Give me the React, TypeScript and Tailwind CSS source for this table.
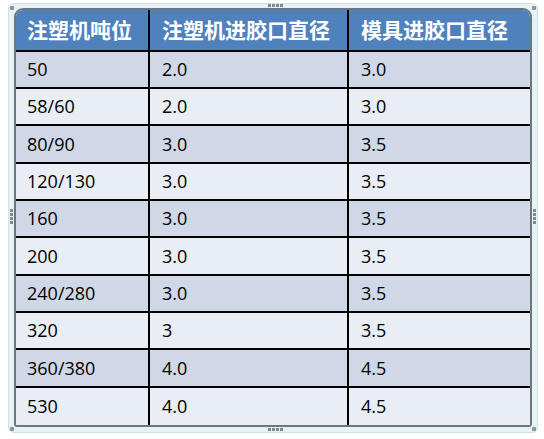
import React from "react";

const rows: [string, string, string][] = [
  ["50", "2.0", "3.0"],
  ["58/60", "2.0", "3.0"],
  ["80/90", "3.0", "3.5"],
  ["120/130", "3.0", "3.5"],
  ["160", "3.0", "3.5"],
  ["200", "3.0", "3.5"],
  ["240/280", "3.0", "3.5"],
  ["320", "3", "3.5"],
  ["360/380", "4.0", "4.5"],
  ["530", "4.0", "4.5"],
];

const Dots = ({ vertical = false }: { vertical?: boolean }) => (
  <div className={vertical ? "flex flex-col gap-[1px]" : "flex gap-[1px]"}>
    {[0, 1, 2, 3].map((i) => (
      <div key={i} className="w-[3px] h-[3px] bg-[#7d8a8e]" />
    ))}
  </div>
);

export default function App() {
  return (
    <div className="w-[544px] h-[439px] bg-white pt-[3px] pl-[8px]">
      <div className="relative w-[530px] h-[430px] rounded-[6px] border border-[#cde0e3] bg-[#e6f2f4] pt-[4px] pl-[5px]">
        {/* resize handles */}
        <div className="absolute left-[259px] top-[0px]"><Dots /></div>
        <div className="absolute left-[259px] bottom-[1px]"><Dots /></div>
        <div className="absolute left-[1px] top-[205px]"><Dots vertical /></div>
        <div className="absolute right-[1px] top-[205px]"><Dots vertical /></div>
        <div className="absolute left-[1px] top-[2px] w-[4px] h-[4px] bg-[#8a9599] rounded-[1px]" />
        <div className="absolute right-[1px] top-[2px] w-[4px] h-[4px] bg-[#8a9599] rounded-[1px]" />
        <div className="absolute left-[1px] bottom-[1px] w-[4px] h-[4px] bg-[#8a9599] rounded-[1px]" />
        <div className="absolute right-[1px] bottom-[1px] w-[4px] h-[4px] bg-[#8a9599] rounded-[1px]" />

        <div
          className="w-[518px] h-[419px] border-2 border-[#6b777b] rounded-t-[9px] rounded-b-[3px] overflow-hidden flex flex-col"
          style={{ fontFamily: '"Open Sans", "Noto Sans CJK SC", sans-serif' }}
        >
          <div
            className="flex h-[42px] bg-[#4f81bd] text-white font-bold text-[21px] border-b-2 border-black"
            style={{ fontFamily: '"Noto Sans CJK SC", sans-serif' }}
          >
            <div className="w-[134px] border-r-2 border-black flex items-center pl-[11px] leading-none">注塑机吨位</div>
            <div className="w-[199px] border-r-2 border-black flex items-center pl-[12px] leading-none">注塑机进胶口直径</div>
            <div className="flex-1 flex items-center pl-[12px] leading-none">模具进胶口直径</div>
          </div>
          {rows.map((r, i) => (
            <div
              key={i}
              className={`flex h-[37.5px] text-[18px] text-black ${i % 2 === 0 ? "bg-[#d0d8e8]" : "bg-[#e9edf4]"} ${i < rows.length - 1 ? "border-b-2 border-black" : ""}`}
            >
              <div className="w-[134px] border-r-2 border-black flex items-center pl-[11px]">{r[0]}</div>
              <div className="w-[199px] border-r-2 border-black flex items-center pl-[12px]">{r[1]}</div>
              <div className="flex-1 flex items-center pl-[12px]">{r[2]}</div>
            </div>
          ))}
        </div>
      </div>
    </div>
  );
}
